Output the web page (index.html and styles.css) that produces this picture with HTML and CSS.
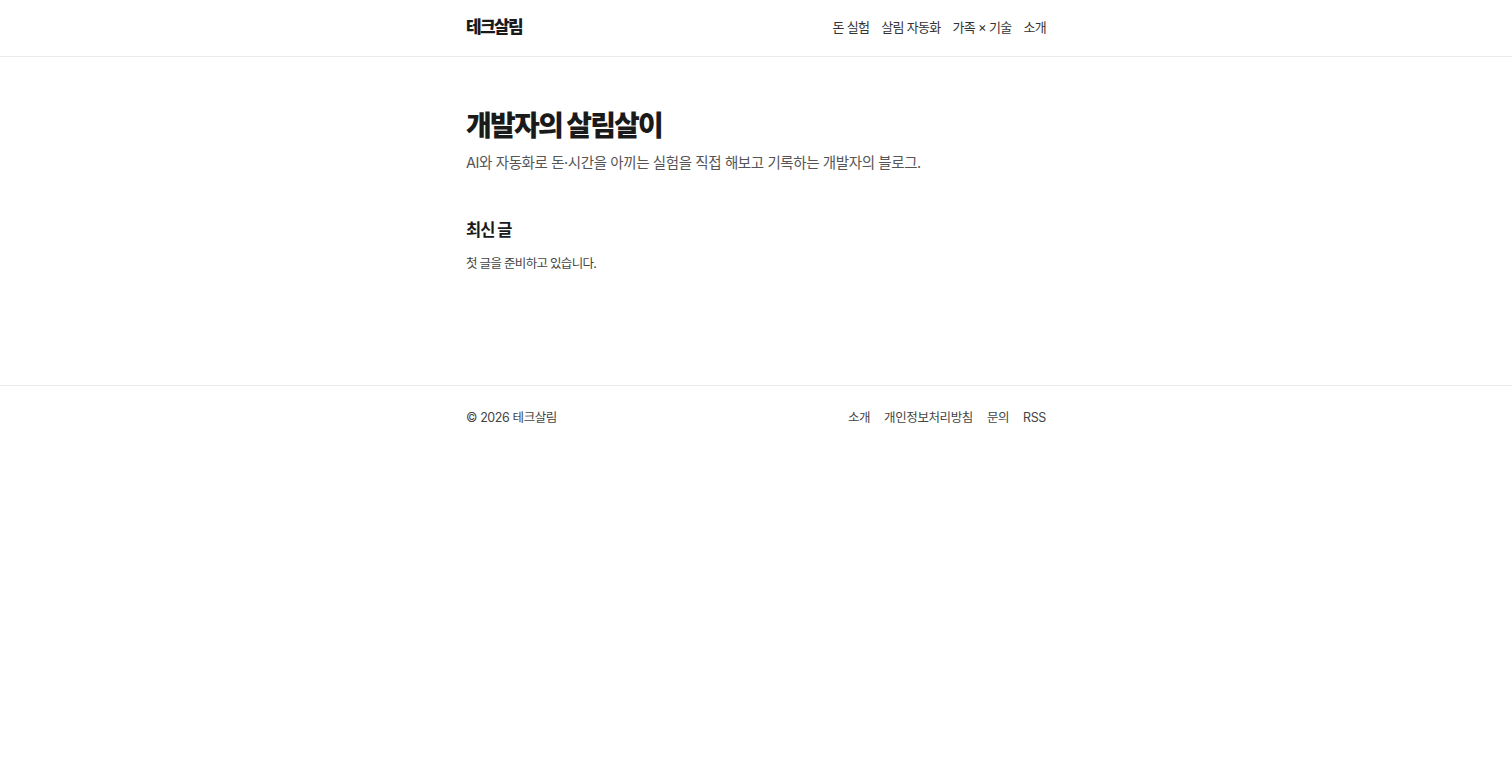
FILE: index.html
```html
<!DOCTYPE html>
<html lang="ko">
<head>
<meta charset="utf-8">
<title>테크살림</title>
<link rel="stylesheet" href="styles.css">
</head>
<body>
<header class="site-header">
  <div class="wrap header-inner">
    <a class="logo" href="#">테크살림</a>
    <nav class="nav">
      <a href="#">돈 실험</a>
      <a href="#">살림 자동화</a>
      <a href="#">가족 × 기술</a>
      <a href="#">소개</a>
    </nav>
  </div>
</header>
<main class="wrap main">
  <h1 class="title">개발자의 살림살이</h1>
  <p class="lead">AI와 자동화로 돈·시간을 아끼는 실험을 직접 해보고 기록하는 개발자의 블로그.</p>
  <h2 class="section-title">최신 글</h2>
  <p class="empty">첫 글을 준비하고 있습니다.</p>
</main>
<footer class="site-footer">
  <div class="wrap footer-inner">
    <span class="copy">© 2026 테크살림</span>
    <nav class="footer-nav">
      <a href="#">소개</a>
      <a href="#">개인정보처리방침</a>
      <a href="#">문의</a>
      <a href="#">RSS</a>
    </nav>
  </div>
</footer>
</body>
</html>
```

FILE: styles.css
```css
* { box-sizing: border-box; }
html, body { margin: 0; padding: 0; background: #fff; }
body {
  font-family: Inter, "Noto Sans CJK KR", "Noto Sans", sans-serif;
  color: #222;
}
a { color: inherit; text-decoration: none; }
.wrap { width: 580px; margin: 0 auto; }

.site-header { border-bottom: 1px solid #ebebeb; }
.header-inner {
  height: 56px;
  padding-bottom: 3px;
  display: flex;
  align-items: center;
  justify-content: space-between;
}
.logo {
  font-size: 17px;
  line-height: 20px;
  font-weight: 800;
  letter-spacing: -1.6px;
  color: #1a1a1a;
}
.nav {
  display: flex;
  gap: 12px;
  font-size: 13px;
  line-height: 20px;
  letter-spacing: -0.7px;
  color: #333;
}

.main { padding: 51px 0 111px; }
.title {
  margin: 0 0 7px;
  font-size: 28px;
  line-height: 36px;
  font-weight: 800;
  letter-spacing: -1.8px;
  color: #1a1a1a;
}
.lead {
  margin: 0;
  font-size: 14.5px;
  line-height: 24px;
  letter-spacing: -0.4px;
  color: #555;
}
.section-title {
  margin: 43px 0 11px;
  font-size: 16.5px;
  line-height: 24px;
  font-weight: 700;
  letter-spacing: -1px;
  color: #1a1a1a;
}
.empty {
  margin: 0;
  font-size: 12.5px;
  line-height: 21px;
  letter-spacing: -0.7px;
  color: #444;
}

.site-footer { border-top: 1px solid #ebebeb; }
.footer-inner {
  padding: 21px 0 20px;
  display: flex;
  justify-content: space-between;
  align-items: center;
  font-size: 12.5px;
  line-height: 21px;
  letter-spacing: -0.4px;
  color: #444;
}
.footer-nav { display: flex; gap: 14px; }
```
